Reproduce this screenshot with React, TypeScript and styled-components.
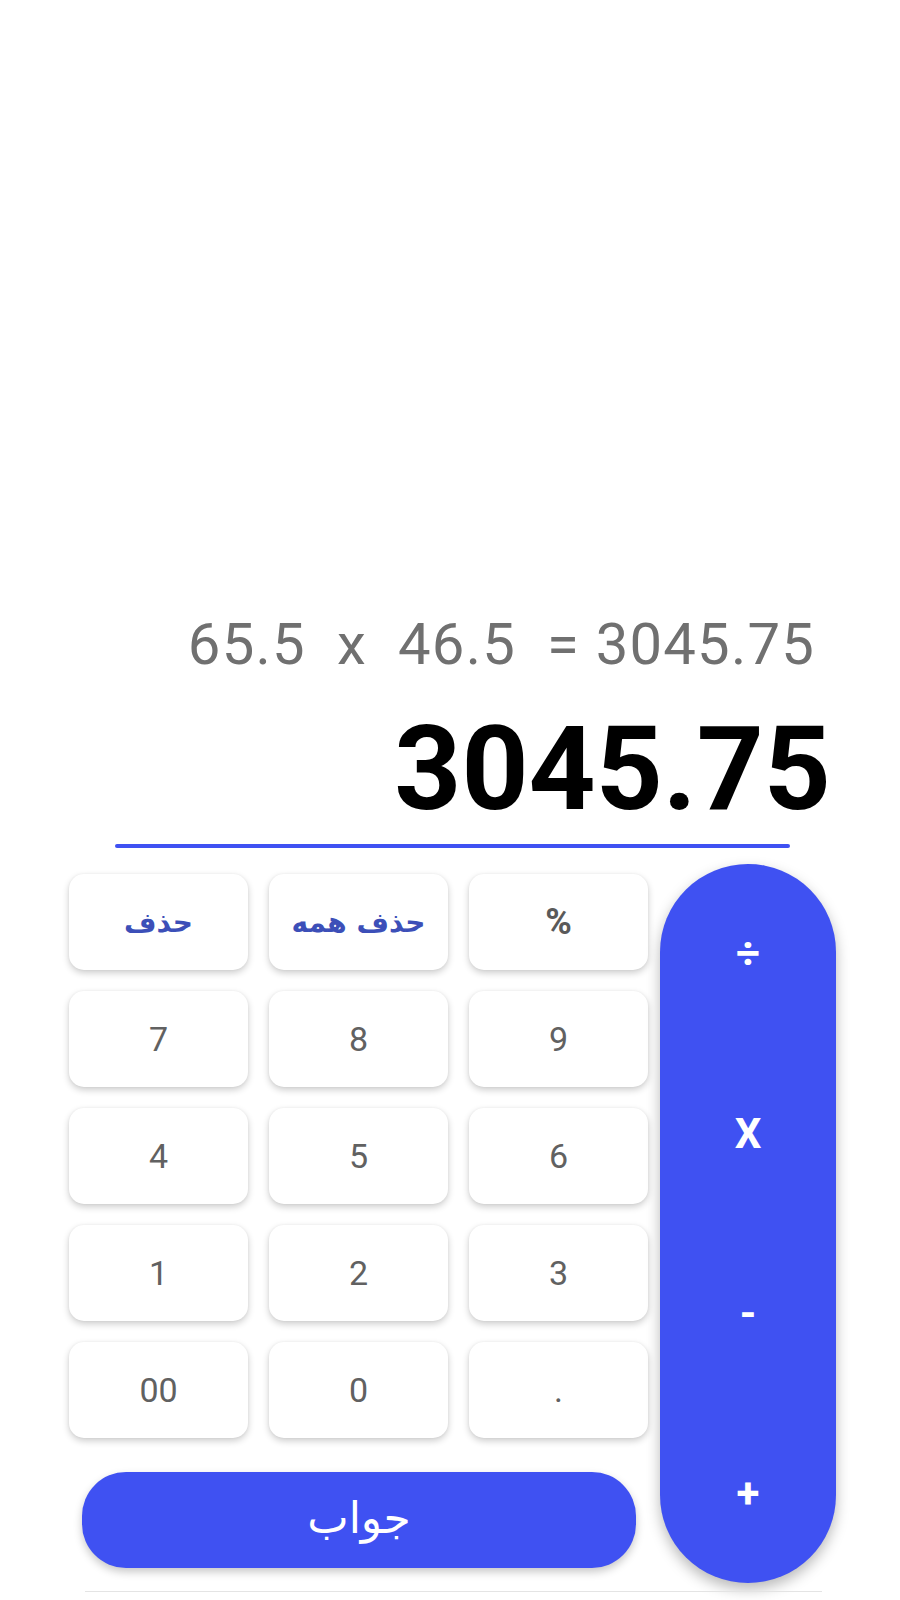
import React from 'react';
import styled, { createGlobalStyle } from 'styled-components';

const GlobalStyle = createGlobalStyle`
  html, body {
    margin: 0;
    padding: 0;
    background: #ffffff;
  }
  * {
    box-sizing: border-box;
  }
`;

const BLUE = '#3f51f2';

const Page = styled.div`
  width: 900px;
  height: 1600px;
  display: flex;
  flex-direction: column;
  background: #fff;
  font-family: Roboto, 'Noto Sans', sans-serif;
  overflow: hidden;
`;

const Expression = styled.div`
  margin-top: 615px;
  padding-right: 85px;
  text-align: right;
  white-space: pre;
  font-family: Roboto, sans-serif;
  font-size: 58px;
  letter-spacing: 1.2px;
  line-height: 1;
  color: #707070;
`;

const Result = styled.div`
  margin-top: 38px;
  padding-right: 69px;
  text-align: right;
  font-family: Roboto, sans-serif;
  font-weight: 700;
  font-size: 117px;
  line-height: 1;
  color: #000;
`;

const Underline = styled.div`
  margin: 16px 0 0 115px;
  width: 675px;
  height: 4px;
  border-radius: 2px;
  background: ${BLUE};
`;

const Keypad = styled.div`
  margin: 16px 0 0 59px;
  display: flex;
  align-items: flex-start;
  gap: 2px;
`;

const KeyColumn = styled.div`
  width: 599px;
  display: flex;
  flex-direction: column;
`;

const KeyRow = styled.div`
  display: flex;
  gap: 21px;
  padding: 10px 10px 11px;
  overflow: hidden;
`;

const Key = styled.button<{ $accent?: boolean }>`
  width: 179px;
  height: 96px;
  border: none;
  border-radius: 15px;
  background: #fff;
  box-shadow: 0 3px 7px rgba(0, 0, 0, 0.2), 0 0 3px rgba(0, 0, 0, 0.05);
  display: flex;
  align-items: center;
  justify-content: center;
  font-family: ${(p) => (p.$accent ? "'DejaVu Sans', sans-serif" : 'Roboto, sans-serif')};
  font-weight: ${(p) => (p.$accent ? 700 : 400)};
  font-size: ${(p) => (p.$accent ? '28px' : '34px')};
  color: ${(p) => (p.$accent ? '#3c4fb8' : '#616161')};
  padding: 0;
`;

const Percent = styled.span`
  font-weight: 700;
  font-size: 36px;
  color: #5a5a5a;
`;

const AnswerButton = styled.button`
  margin: 23px 0 0 23px;
  width: 554px;
  height: 96px;
  border: none;
  border-radius: 44px;
  background: ${BLUE};
  box-shadow: 0 4px 8px rgba(0, 0, 0, 0.22);
  color: #fff;
  font-family: 'DejaVu Sans', sans-serif;
  font-size: 44px;
  display: flex;
  align-items: center;
  justify-content: center;
  padding: 0 0 6px 0;
`;

const OperatorPill = styled.div`
  width: 176px;
  height: 719px;
  border-radius: 88px;
  background: ${BLUE};
  box-shadow: 0 6px 14px rgba(0, 0, 0, 0.28);
  display: flex;
  flex-direction: column;
`;

const Operator = styled.div`
  flex: 1;
  display: flex;
  align-items: center;
  justify-content: center;
  color: #fff;
  font-family: Roboto, sans-serif;
  font-weight: 700;
  font-size: 42px;
`;

const BottomRule = styled.div`
  margin: 8px 0 0 85px;
  width: 737px;
  height: 1px;
  background: #e4e4e4;
`;

type KeyDef = { label: React.ReactNode; accent?: boolean };

const rows: KeyDef[][] = [
  [
    { label: 'حذف', accent: true },
    { label: 'حذف همه', accent: true },
    { label: <Percent>%</Percent> },
  ],
  [{ label: '7' }, { label: '8' }, { label: '9' }],
  [{ label: '4' }, { label: '5' }, { label: '6' }],
  [{ label: '1' }, { label: '2' }, { label: '3' }],
  [{ label: '00' }, { label: '0' }, { label: '.' }],
];

const operators = ['÷', 'X', '-', '+'];

export default function App() {
  return (
    <>
      <GlobalStyle />
      <Page>
        <Expression>{'65.5  x  46.5  = 3045.75'}</Expression>
        <Result>3045.75</Result>
        <Underline />
        <Keypad>
          <KeyColumn>
            {rows.map((row, i) => (
              <KeyRow key={i}>
                {row.map((k, j) => (
                  <Key key={j} $accent={k.accent} dir={k.accent ? 'rtl' : undefined}>
                    {k.label}
                  </Key>
                ))}
              </KeyRow>
            ))}
            <AnswerButton dir="rtl">جواب</AnswerButton>
          </KeyColumn>
          <OperatorPill>
            {operators.map((op) => (
              <Operator key={op}>{op}</Operator>
            ))}
          </OperatorPill>
        </Keypad>
        <BottomRule />
      </Page>
    </>
  );
}
